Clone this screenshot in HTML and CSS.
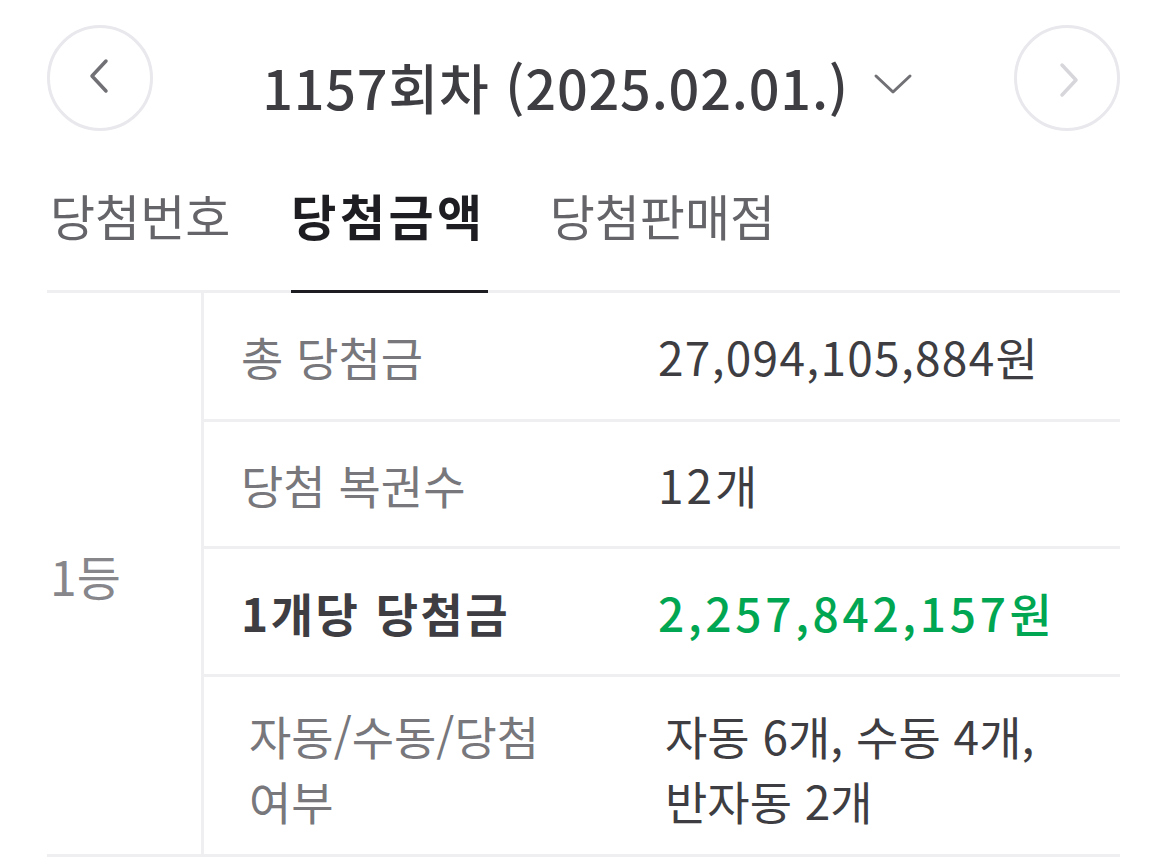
FILE: index.html
```html
<!DOCTYPE html>
<html lang="ko">
<head>
<meta charset="utf-8">
<link rel="stylesheet" href="styles.css">
</head>
<body>
<div class="page">
  <header class="header">
    <button class="nav-btn prev" aria-label="이전">
      <svg width="24" height="36" viewBox="0 0 24 36"><path d="M19 3 L5 18 L19 33" fill="none" stroke="#707075" stroke-width="3.5" stroke-linecap="round" stroke-linejoin="round"/></svg>
    </button>
    <div class="title">
      <span class="title-text">1157회차 (2025.02.01.)</span>
      <svg class="chev" width="40" height="24" viewBox="0 0 40 24"><path d="M3 4 L20 20 L37 4" fill="none" stroke="#707075" stroke-width="3" stroke-linecap="round" stroke-linejoin="round"/></svg>
    </div>
    <button class="nav-btn next" aria-label="다음">
      <svg width="24" height="36" viewBox="0 0 24 36"><path d="M5 3 L19 18 L5 33" fill="none" stroke="#d6d6db" stroke-width="3.5" stroke-linecap="round" stroke-linejoin="round"/></svg>
    </button>
  </header>

  <nav class="tabs">
    <span class="tab">당첨번호</span>
    <span class="tab active">당첨금액</span>
    <span class="tab">당첨판매점</span>
  </nav>

  <div class="table">
    <div class="rank">1등</div>
    <div class="rows">
      <div class="row r1">
        <div class="label">총 당첨금</div>
        <div class="value">27,094,105,884원</div>
      </div>
      <div class="row r2">
        <div class="label">당첨 복권수</div>
        <div class="value count">12개</div>
      </div>
      <div class="row r3">
        <div class="label strong">1개당 당첨금</div>
        <div class="value green">2,257,842,157원</div>
      </div>
      <div class="row r4">
        <div class="label multi">자동/수동/당첨<br>여부</div>
        <div class="value multi">자동 6개, 수동 4개,<br>반자동 2개</div>
      </div>
    </div>
  </div>
</div>
</body>
</html>
```

FILE: styles.css
```css
* { box-sizing: border-box; }
html, body { margin: 0; padding: 0; background: #ffffff; }
body {
  font-family: "Noto Sans CJK KR", "Noto Sans", sans-serif;
  color: #3d3d42;
}
.page {
  padding: 25px 50px 0 47px;
}
.header {
  display: flex;
  align-items: center;
  justify-content: space-between;
  height: 106px;
}
.nav-btn {
  width: 106px;
  height: 106px;
  border-radius: 50%;
  border: 3px solid #e8e8ed;
  background: #fff;
  display: flex;
  align-items: center;
  justify-content: center;
  padding: 0;
}
.prev svg { margin-right: 2px; margin-top: -4px; }
.next svg { margin-left: 5px; margin-top: 3px; }
.title {
  display: flex;
  align-items: center;
  gap: 24px;
  margin-top: 16px;
  margin-left: 8px;
}
.title-text {
  font-size: 54px;
  font-weight: 500;
  letter-spacing: 0.8px;
  color: #3d3d42;
}
.chev { margin-top: -4px; }

.tabs {
  display: flex;
  gap: 62px;
  padding-left: 3px;
  margin-top: 52px;
  border-bottom: 3px solid #efeff2;
}
.tab {
  font-size: 49px;
  line-height: 64px;
  color: #646469;
  padding-bottom: 43px;
  border-bottom: 3px solid transparent;
  margin-bottom: -3px;
}
.tab.active {
  font-weight: 700;
  letter-spacing: 3.5px;
  margin-left: -1px;
  padding-right: 2px;
  color: #1e1e22;
  border-bottom-color: #1e1e22;
}

.table {
  display: flex;
  border-bottom: 3px solid #efeff2;
}
.rank {
  width: 157px;
  border-right: 3px solid #efeff2;
  display: flex;
  align-items: center;
  padding-left: 3px;
  padding-top: 2px;
  font-size: 48px;
  color: #86868b;
}
.rows { flex: 1; }
.row {
  display: flex;
  border-bottom: 3px solid #efeff2;
}
.row.r1 { height: 129px; }
.row.r2 { height: 127px; }
.row.r3 { height: 128px; }
.row.r4 { height: 177px; border-bottom: none; }
.label {
  width: 416px;
  display: flex;
  align-items: center;
  padding-left: 37px;
  font-size: 46px;
  color: #77777c;
}
.value {
  flex: 1;
  display: flex;
  align-items: center;
  padding-left: 38px;
  font-size: 46px;
  letter-spacing: 1.3px;
  color: #3d3d42;
}
.value.count { letter-spacing: 3px; }
.label.strong {
  font-weight: 700;
  letter-spacing: 2.5px;
  color: #3d3d42;
}
.value.green {
  color: #00a651;
  font-weight: 500;
  letter-spacing: 3.7px;
}
.label.multi, .value.multi {
  line-height: 65px;
  padding-left: 45px;
  padding-top: 4px;
}
.value.multi { letter-spacing: 0; }
```
